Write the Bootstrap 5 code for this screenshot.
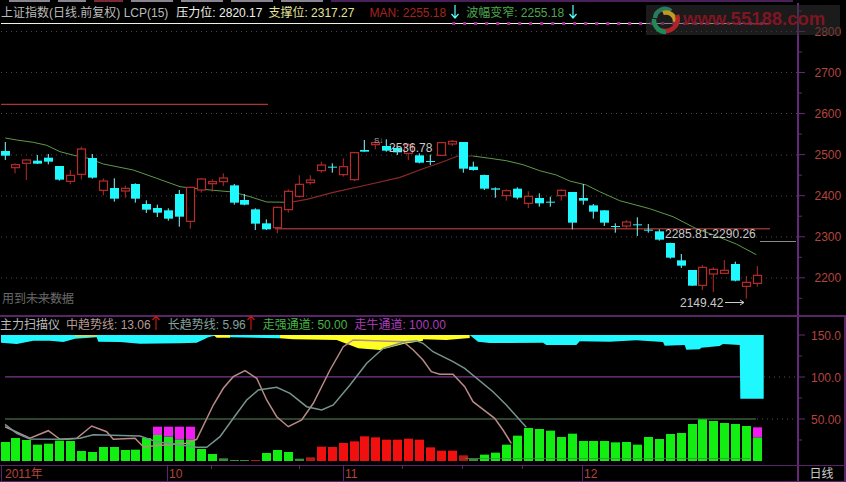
<!doctype html>
<html lang="zh"><head><meta charset="utf-8"><title>上证指数</title>
<link href="https://cdn.jsdelivr.net/npm/bootstrap@5.3.0/dist/css/bootstrap.min.css" rel="stylesheet">
<style>
html,body{margin:0;background:#000;overflow:hidden}
body{width:846px;height:482px;font:12px/16px "Liberation Sans","Noto Sans CJK SC",sans-serif;color:#bbb}
.strip{height:3px;width:793px;padding-left:9px;gap:8px;align-items:flex-start}
.strip i{display:block;height:2px;background:#8a8490}
.strip i.rd{background:#7a2a34}
.strip i.pu{background:#4a2058;flex:1}
.mainrow{height:312px}
.lowrow{height:150px;border-top:2px solid #5a2468}
.daterow{height:17px;border-top:1px solid #5a2468;border-bottom:1px solid #5a2468}
.plot{width:797px}
.rail{width:49px;border-left:2px solid #66287a;position:relative}
.rail svg,.plot svg{display:block}
.hdr{height:18px;white-space:nowrap;padding-left:1px;line-height:19px;padding-top:1px}
.hdr2{height:16px;white-space:nowrap;line-height:16px;margin-top:0}
.hdr2+svg{margin-top:-1px}
.c-w{color:#f0f0ea}.c-y{color:#e4e59a}.c-r{color:#a8231f}.c-g{color:#4ea64e}.c-c{color:#5ff}
.c-p{color:#b89a94}.c-t{color:#86a09c}.c-gg{color:#46b546}.c-m{color:#ad3dbd}.c-rr{color:#c21818}
.g1{margin-left:8px}.g2{margin-left:6px}.g3{margin-left:15px}.g7{margin-left:7px}
.plot .arw{flex:none;width:10px;height:14px;fill:none;stroke:currentColor;stroke-width:1.2}
.arw.dn{margin-left:4px;margin-top:1px}
.arw.up{margin-top:-2px;overflow:visible}
.plot .arw.up{height:15px}
.bk{background:#000}
.wm{position:absolute;left:646px;top:5px;width:194px;height:30px;background:rgba(50,50,50,.55);display:flex;align-items:center}
.wm b{font:bold 18.5px/14px "Liberation Sans",sans-serif;color:rgba(146,20,36,.85);margin-left:2px;margin-top:-3px}
.wm svg{margin-left:3px;flex:none}
.datecell{color:#b5443e;position:absolute;top:1px;line-height:15px;font-size:12px}
.tick{position:absolute;top:0;width:1px;height:15px;background:#5a2468}
.mtick{position:absolute;top:0;width:1px;height:3px;background:#5a2468}
.dates{position:relative;width:797px;height:15px}
.daily{width:49px;border-left:2px solid #66287a;border-right:2px solid #5a2468;text-align:center;color:#ccc;line-height:16px}
.lowrail{border-right:2px solid #5a2468}
</style></head>
<body class="bk position-relative">
<div class="strip d-flex">
  <i style="width:41px"></i><i style="width:28px"></i><i class="rd" style="width:29px"></i><i style="width:42px"></i><i style="width:42px"></i><i style="width:42px"></i><i style="width:42px"></i><i class="pu"></i>
</div>
<div class="d-flex mainrow">
  <div class="plot">
    <div class="hdr d-flex">
      <span>上证指数(日线.前复权) LCP(15)</span>
      <span class="c-w g1">压力位: 2820.17</span>
      <span class="c-y g2">支撑位: 2317.27</span>
      <span class="c-r g3">MAN: 2255.18</span><svg class="arw dn c-c" viewBox="0 0 10 14"><path d="M5 0V13M1.5 9L5 13L8.5 9"/></svg>
      <span class="c-g g2">波幅变窄: 2255.18</span><svg class="arw dn c-c" viewBox="0 0 10 14"><path d="M5 0V13M1.5 9L5 13L8.5 9"/></svg>
    </div>
    <svg id="main" width="797" height="294" viewBox="0 21 797 294"></svg>
  </div>
  <div class="rail"><svg id="ax1" width="47" height="312" viewBox="799 3 47 312"></svg></div>
</div>
<div class="d-flex lowrow">
  <div class="plot">
    <div class="hdr2 d-flex">
      <span>主力扫描仪</span>
      <span class="c-p g2">中趋势线: 13.06</span><svg class="arw up c-rr" viewBox="0 0 10 15"><path d="M5 15V1M1.5 5L5 1L8.5 5"/></svg>
      <span class="c-t g7">长趋势线: 5.96</span><svg class="arw up c-rr" viewBox="0 0 10 15"><path d="M5 15V1M1.5 5L5 1L8.5 5"/></svg>
      <span class="c-gg g7">走强通道: 50.00</span>
      <span class="c-m g7">走牛通道: 100.00</span>
    </div>
    <svg id="low" width="797" height="135" viewBox="0 332 797 135"></svg>
  </div>
  <div class="rail lowrail"><svg id="ax2" width="45" height="148" viewBox="799 317 45 148"></svg></div>
</div>
<div class="d-flex daterow">
  <div class="dates">
    <span class="tick" style="left:1px"></span><span class="datecell" style="left:5px">2011年</span>
    <span class="tick" style="left:167px"></span><span class="datecell" style="left:169px">10</span>
    <span class="mtick" style="left:211px"></span><span class="mtick" style="left:299px"></span>
    <span class="tick" style="left:343px"></span><span class="datecell" style="left:345px">11</span>
    <span class="mtick" style="left:402px"></span><span class="mtick" style="left:462px"></span><span class="mtick" style="left:522px"></span>
    <span class="tick" style="left:582px"></span><span class="datecell" style="left:584px">12</span>
  </div>
  <div class="daily">日线</div>
</div>
<div class="wm">
  <svg width="32" height="30" viewBox="0 0 32 30" fill="none" stroke-width="4.5">
    <path d="M6 13A10 10 0 0 1 22 6" stroke="#2a7a62"/>
    <path d="M14 8A9 9 0 0 1 26 17" stroke="#c09a20"/>
    <path d="M28 10A12 12 0 0 1 12 25" stroke="#b02428"/>
    <path d="M17 27A12 12 0 0 1 5 14" stroke="#1f8a58"/>
  </svg>
  <b>www.55188.com</b>
</div>
<script src="https://cdn.jsdelivr.net/npm/bootstrap@5.3.0/dist/js/bootstrap.bundle.min.js"></script>
<script>
const XS=[5.3,15,26.3,37.3,48.3,59.3,70.3,81.3,92.3,103.3,114.3,125.3,135.3,146.3,157.3,168.3,179.3,190.3,201.3,212.3,223.3,234.3,244.3,255.3,266.3,277.3,288.3,299.3,310.3,321.3,332.3,343.3,354.3,364.3,375.3,386.3,397.3,408.3,419.3,430.3,441.3,452.3,463.3,473.3,484.3,495.3,506.3,517.3,528.3,539.3,550.3,561.3,572.3,583.3,593.3,604.3,615.3,626.3,637.3,648.3,659.3,670.3,681.3,692.3,702.3,713.3,724.3,735.3,746.3,757.3];
const C="cyan",R="red";
const K=[[C,36,63,77,90],[R,100,104,113,130],[R,88,90,100,150],[C,75,92,101,102],[C,72,83,95,103],[C,108,108,149,152],[R,120,136,154,163],[R,50,57,133,148],[C,72,84,143,146],[R,145,153,181,196],[C,145,174,206,215],[R,167,175,183,203],[C,160,162,206,218],[C,211,222,239,249],[C,224,234,248,261],[C,235,241,266,272],[C,180,192,260,290],[R,170,172,274,296],[R,145,147,180,188],[R,148,155,161,185],[R,130,144,155,168],[C,162,166,218,224],[C,192,210,224,226],[C,235,238,281,300],[C,268,280,298,300],[R,230,232,293,310],[R,178,184,239,248],[R,136,163,199,203],[R,136,150,158,164],[R,95,105,122,128],[C,100,110,113,128],[R,85,110,134,140],[R,66,68,149,153],[C,30,60,65,65],[R,32,38,44,58],[C,28,48,62,65],[C,50,54,67,75],[R,40,44,70,90],[C,70,76,98,100],[C,74,93,96,105],[R,36,38,76,78],[R,30,34,42,48],[C,36,36,116,128],[C,95,110,120,122],[C,134,135,176,180],[C,172,175,179,203],[R,178,182,197,212],[C,172,176,203,208],[R,184,199,220,234],[C,190,204,220,230],[C,200,215,216,230],[R,178,181,197,212],[C,186,186,278,298],[C,162,204,212,224],[C,222,226,245,266],[C,240,241,278,288],[C,280,288,290,308],[R,270,276,288,298],[C,262,283,286,318],[C,282,299,302,308],[C,298,304,329,332],[C,338,339,383,386],[C,372,391,407,414],[C,420,420,467,468],[R,405,412,466,480],[R,412,418,432,486],[R,390,421,430,432],[C,395,402,452,454],[R,438,457,469,506],[R,408,436,460,470]];
const BT=[396,384,390,404,401,392,393,423,426,411,411,420,419,384,375,380,388,388,417,432,445,450,450,450,429,420,426,446,442,410,411,399,394,379,382,389,389,386,389,412,422,422,436,447,434,428,404,377,354,357,362,381,371,393,393,393,397,396,404,381,387,372,369,342,328,333,339,342,348,382];
const MAG={14:350,15:350,16:350,17:350,69:352};
const REDB=[23,28,29,30,31,32,33,34,35,36,37,38,39,40,41,42];
const cY=z=>130+z/3, lY=z=>310+z/3;
const cyanC="#1ff8ff",redC="#b82c2c";
const pts=(a,fx,fy)=>a.map(p=>fx(p[0]).toFixed(1)+","+fy(p[1]).toFixed(1)).join(" ");
const z3=x=>x/3, z4=x=>423+x/3;
let m="";
[31.5,72.5,113.5,155,196,237,278].forEach(y=>m+=`<line x1="1" x2="797" y1="${y}" y2="${y}" stroke="#4a4a4a" stroke-width="1" stroke-dasharray="1 4"/>`);
m+=`<line x1="1" x2="770" y1="23.5" y2="23.5" stroke="#f0f0e0" stroke-width="1"/>`;
for(let x=453.7;x<770;x+=11)m+=`<rect x="${x-1.5}" y="22" width="3" height="3" fill="#a8289c"/>`;
m+=`<line x1="1" x2="268" y1="104.3" y2="104.3" stroke="#a33" stroke-width="1.2"/>`;
m+=`<line x1="275" x2="770" y1="228.7" y2="228.7" stroke="#8c2f2f" stroke-width="1.6"/>`;
m+=`<line x1="760" x2="796" y1="241.5" y2="241.5" stroke="#8a8a8a"/>`;
const g1=[[16,24],[50,30],[100,37],[140,46],[180,65],[230,78],[265,85],[310,102],[400,120],[470,145],[540,170],[580,175],[640,181],[700,186],[750,200],[800,216],[870,217]];
m+=`<polyline fill="none" stroke="#5f9a4a" points="${pts(g1,z3,cY)}"/>`;
m+=`<polyline fill="none" stroke="#8a2a26" stroke-width="1.2" points="${pts([[870,217],[920,208],[1000,187],[1100,165],[1200,142],[1269,116],[1329,95],[1374,78],[1419,78]],z3,cY)}"/>`;
const g2=[[150,78],[200,85],[250,92],[300,104],[350,122],[400,135],[440,153],[490,165],[530,185],[590,212],[680,236],[750,260],[820,296],[870,314],[940,342],[1000,374]];
m+=`<polyline fill="none" stroke="#5f9a4a" points="${pts(g2,z4,cY)}"/>`;
K.forEach((k,i)=>{const x=XS[i],[t,a,b,c,d]=k,col=t==C?cyanC:redC;
 m+=`<line x1="${x}" x2="${x}" y1="${cY(a)}" y2="${cY(d)}" stroke="${t==C?'#8ff':col}" stroke-width="1"/>`;
 const bx=Math.round(x-4.3);
 if(t==C){m+=`<rect x="${bx}" y="${cY(b)}" width="9" height="${Math.max(1,(c-b)/3)}" fill="${col}"/>`}
 else{m+=`<rect x="${bx+.5}" y="${cY(b)}" width="8" height="${Math.max(1,(c-b)/3)}" fill="#000" stroke="${col}" stroke-width="1.2"/>`}
});
const T=(x,y,s,f,fs=12)=>`<text x="${x}" y="${y}" fill="${f}" font-size="${fs}" font-family="Liberation Sans,Noto Sans CJK SC,sans-serif">${s}</text>`;
m+=T(374,143,"S↓","#aaa",8);
m+=T(389,152,"2536.78","#c8c8c8");
m+=T(665,238,"2285.81-2290.26","#c8c8c8");
m+=T(680,307,"2149.42","#c8c8c8");
m+=`<path d="M725 302.5H744M740 300l4 2.5-4 2.5" fill="none" stroke="#ccc"/>`;
m+=T(2,303,"用到未来数据","#6a6a6a");
m+=`<line x1="26" x2="73" y1="298" y2="298" stroke="#555"/>`;
document.getElementById("main").innerHTML=m;
let a="",lbl="#b5443e",rail="#66287a";
[2800,2700,2600,2500,2400,2300,2200].forEach((v,i)=>{const y=31.5+i*41.05;
 a+=`<line x1="799" x2="805" y1="${y}" y2="${y}" stroke="${rail}"/>`;
 a+=`<line x1="799" x2="802" y1="${y+20.5}" y2="${y+20.5}" stroke="${rail}"/>`;
 a+=T(814.5,y+4.5,v,lbl);});
a+=`<line x1="799" x2="802" y1="11" y2="11" stroke="${rail}"/>`;
document.getElementById("ax1").innerHTML=a;
let l="";
const pb=(a,fx)=>a.map(p=>[fx(p[0]),lY(p[1])]);
const bandC1=[[3,98],[50,102],[100,92],[150,92],[190,96],[225,86],[290,82],[295,95],[360,96],[420,101],[540,100],[590,98],[625,82],[650,76],[690,82],[840,85]];
const poly=(arr,f)=>`<polygon fill="${f}" points="${arr.map(p=>p[0].toFixed(1)+","+p[1].toFixed(1)).join(" ")}"/>`;
l+=poly([[1,335],...pb(bandC1,z3),[280,335]],cyanC);
l+=poly(pb([[225,75],[225,80],[290,80],[290,75]],z3),"#d9d94a");
l+=poly(pb([[640,75],[650,83],[690,83],[690,75]],z3),"#ffff30");
l+=poly(pb([[840,75],[840,85],[880,88],[1010,90],[1075,115],[1140,120],[1210,102],[1269,92]],z3).concat(pb([[0,88],[70,90],[140,84],[140,75]],z4)),"#ffff22");
l+=poly(pb([[140,75],[165,95],[200,99],[360,98],[370,105],[460,105],[470,94],[560,95],[640,91],[720,96],[725,107],[785,105],[790,119],[830,118],[835,113],[890,108],[900,102],[950,105],[952,266],[1022,266],[1022,75]],z4),cyanC);
l+=`<line x1="5" x2="740" y1="376.8" y2="376.8" stroke="#7a3a8c" stroke-width="1.2"/><line x1="5" x2="756" y1="419" y2="419" stroke="#5a8a5a" stroke-width="1.2"/>`;
l+=`<line x1="764" x2="797" y1="377" y2="377" stroke="#555" stroke-dasharray="1 4"/><line x1="757" x2="797" y1="419" y2="419" stroke="#555" stroke-dasharray="1 4"/>`;
XS.forEach((x,i)=>{const t=lY(BT[i]),bx=Math.round(x-4.3);
 const isR=REDB.includes(i);
 l+=`<rect x="${bx}" y="${t}" width="9" height="${461-t}" fill="${isR?(i==23||i==28||i==42?'#b21a12':'#f01010'):(BT[i]>=444?'#3c8a3c':'#12ee12')}"/>`;
 if(MAG[i])l+=`<rect x="${bx}" y="${lY(MAG[i])}" width="9" height="${(BT[i]-MAG[i])/3}" fill="#f01cf0"/>`;
});
l+=`<line x1="465" x2="750" y1="458.5" y2="458.5" stroke="#3f8f3f" stroke-width=".8"/>`;
const pink=[[15,350],[90,385],[145,362],[180,388],[230,385],[275,348],[320,365],[340,388],[405,385],[430,410],[560,400],[590,388],[640,285],[670,235],[700,200],[735,182],[770,205],[800,270],[830,320],[865,350],[905,330],[940,280],[990,180],[1030,110],[1060,90],[1210,95],[1240,120],[1269,150],[1294,185],[1319,193],[1359,193],[1394,230],[1419,275],[1484,325],[1509,360],[1534,400]];
l+=`<polyline fill="none" stroke="#b88a88" stroke-width="1.5" points="${pts(pink,z3,lY)}"/>`;
const teal=[[15,343],[50,370],[90,387],[200,388],[240,385],[280,374],[420,378],[470,395],[590,412],[620,412],[660,380],[700,325],[740,270],[775,240],[830,232],[870,250],[920,290],[965,300],[1000,285],[1050,225],[1100,160],[1150,115],[1215,95],[1250,92],[1269,100],[1299,125],[1359,155],[1394,175],[1479,245],[1519,285],[1579,352]];
l+=`<polyline fill="none" stroke="#76948f" stroke-width="1.5" points="${pts(teal,z3,lY)}"/>`;
document.getElementById("low").innerHTML=l;
let b="";
[["150.0",335],["100.0",377],["50.00",419]].forEach(([s,y])=>{
 b+=`<line x1="799" x2="805" y1="${y}" y2="${y}" stroke="${rail}"/>`;
 b+=`<line x1="799" x2="802" y1="${y+21}" y2="${y+21}" stroke="${rail}"/>`;
 b+=T(811,y+5,s,lbl);});
document.getElementById("ax2").innerHTML=b;
</script>
</body></html>
